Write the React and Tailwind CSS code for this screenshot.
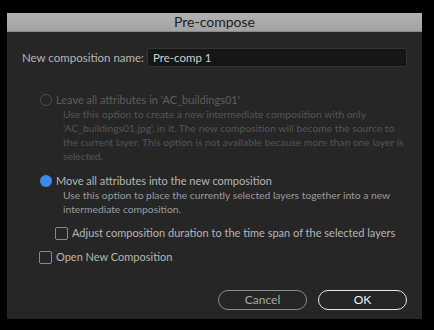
import React from 'react'

const font = { fontFamily: '"Lato", "Open Sans", sans-serif' }

const Radio = ({ checked, disabled }) => (
  <span
    className={`inline-block w-[12px] h-[12px] rounded-full shrink-0 ${
      checked ? 'bg-[#3d8ae8]' : disabled ? 'border-[1.5px] border-[#4e4e4e]' : 'border-[1.5px] border-[#8a8a8a]'
    }`}
  />
)

const Checkbox = () => (
  <span className="inline-block w-[13px] h-[13px] rounded-[2px] border-[1.5px] border-[#8a8a8a] shrink-0" />
)

export default function App() {
  return (
    <div className="w-[434px] h-[330px] bg-black pt-[13px] pl-[7px]" style={font}>
      <div className="w-[415px] h-[306px] bg-[#262626] flex flex-col">
        {/* Title */}
        <div className="h-[19px] bg-gradient-to-b from-[#b2b2b2] to-[#a2a2a2] border-b border-[#8a8a8a] flex items-center justify-center text-[14px] text-[#1c1c1c] leading-none">
          Pre-compose
        </div>

        <div className="flex flex-col px-[15px] pt-[16px] text-[11px] leading-[14px] whitespace-nowrap">
          <div className="flex items-center">
            <span className="text-[#b6b6b6] w-[125px] text-[11.5px]">New composition name:</span>
            <div className="flex-1 h-[19px] bg-[#161616] border border-[#333333] rounded-[2px] flex items-center px-[5px] text-[#cfcfcf] text-[11.5px]">
              Pre-comp 1
            </div>
          </div>

          {/* Option 1 (disabled) */}
          <div className="mt-[26px] ml-[18px] flex flex-col">
            <div className="flex items-center gap-[4px] text-[#5e5e5e]">
              <Radio disabled />
              <span>Leave all attributes in 'AC_buildings01'</span>
            </div>
            <div className="ml-[23px] text-[#555555] text-[10.3px]">
              Use this option to create a new intermediate composition with only<br />
              'AC_buildings01.jpg', in it. The new composition will become the source to<br />
              the current layer. This option is not available because more than one layer is<br />
              selected.
            </div>
          </div>

          {/* Option 2 */}
          <div className="mt-[11px] ml-[18px] flex flex-col">
            <div className="flex items-center gap-[4px] text-[#b6b6b6]">
              <Radio checked />
              <span>Move all attributes into the new composition</span>
            </div>
            <div className="ml-[23px] text-[#9c9c9c] text-[10.3px]">
              Use this option to place the currently selected layers together into a new<br />
              intermediate composition.
            </div>
          </div>

          <div className="mt-[10px] ml-[33px] flex items-center gap-[4px] text-[#b6b6b6]">
            <Checkbox />
            <span>Adjust composition duration to the time span of the selected layers</span>
          </div>

          <div className="mt-[10px] ml-[17px] flex items-center gap-[4px] text-[#b6b6b6]">
            <Checkbox />
            <span>Open New Composition</span>
          </div>

          <div className="mt-[26px] flex justify-end gap-[11px]">
            <button className="w-[89px] h-[20px] rounded-full border-[1.5px] border-[#8c8c8c] text-[#a8a8a8] text-[12px] leading-none">
              Cancel
            </button>
            <button className="w-[89px] h-[20px] rounded-full border-[1.5px] border-[#e8e8e8] text-[#f0f0f0] text-[12px] leading-none">
              OK
            </button>
          </div>
        </div>
      </div>
    </div>
  )
}
